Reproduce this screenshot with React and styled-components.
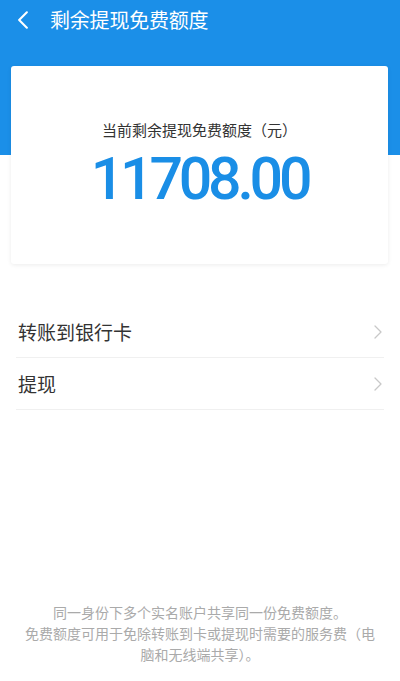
import React from "react";
import styled, { createGlobalStyle } from "styled-components";

const Global = createGlobalStyle`
  html, body {
    margin: 0;
    padding: 0;
    background: #fff;
    font-family: Roboto, "Noto Sans CJK SC", "Noto Sans", sans-serif;
  }
`;

const Page = styled.div`
  display: flex;
  flex-direction: column;
  min-height: 100vh;
  width: 400px;
  background: #fff;
`;

const Hero = styled.div`
  background: #1b8fe8;
  height: 155px;
  flex-shrink: 0;
  padding: 0 11px 0 17px;
  box-sizing: border-box;
`;

const NavBar = styled.div`
  display: flex;
  align-items: center;
  height: 39px;
  color: #fff;
`;

const BackBtn = styled.div`
  width: 14px;
  height: 18px;
  display: flex;
  align-items: center;
  margin-right: 19px;
`;

const Title = styled.div`
  font-size: 20px;
  letter-spacing: -0.2px;
`;

// card lies over the lower part of the blue band
const Card = styled.div`
  position: relative;
  margin: -89px 12px 0 11px;
  height: 198px;
  flex-shrink: 0;
  background: #fff;
  border-radius: 3px;
  box-shadow: 0 1px 4px rgba(0, 0, 0, 0.08);
  display: flex;
  flex-direction: column;
  align-items: center;
  padding-top: 54px;
  box-sizing: border-box;
`;

const CardLabel = styled.div`
  font-size: 15px;
  color: #333;
  line-height: 22px;
`;

const Amount = styled.div`
  font-family: Roboto, sans-serif;
  font-weight: 500;
  font-size: 59px;
  line-height: 60px;
  color: #1a8ee6;
  letter-spacing: -4.2px;
  margin-top: 7px;
`;

const List = styled.div`
  margin-top: 42px;
  padding: 0 16px;
`;

const Row = styled.div`
  display: flex;
  align-items: center;
  justify-content: space-between;
  height: 51px;
  border-bottom: 1px solid #f0f0f0;
  padding: 0 2px;
  font-size: 19px;
  color: #333;
`;

const Footer = styled.div`
  margin-top: auto;
  padding: 0 24px 15px;
  text-align: center;
  font-size: 14px;
  line-height: 21px;
  color: #aaa;
`;

const BackIcon = () => (
  <svg width="12" height="18" viewBox="0 0 8 14" fill="none">
    <path d="M7 1 L1 7 L7 13" stroke="#fff" strokeWidth="1.6" strokeLinecap="round" strokeLinejoin="round" />
  </svg>
);

const RowArrow = () => (
  <svg width="8" height="14" viewBox="0 0 8 14" fill="none">
    <path d="M1 1 L7 7 L1 13" stroke="#c8c8c8" strokeWidth="1.3" strokeLinecap="round" strokeLinejoin="round" />
  </svg>
);

export default function App() {
  return (
    <Page>
      <Global />
      <Hero>
        <NavBar>
          <BackBtn>
            <BackIcon />
          </BackBtn>
          <Title>剩余提现免费额度</Title>
        </NavBar>
      </Hero>
      <Card>
        <CardLabel>当前剩余提现免费额度（元）</CardLabel>
        <Amount>11708.00</Amount>
      </Card>
      <List>
        <Row>
          转账到银行卡
          <RowArrow />
        </Row>
        <Row>
          提现
          <RowArrow />
        </Row>
      </List>
      <Footer>
        同一身份下多个实名账户共享同一份免费额度。
        <br />
        免费额度可用于免除转账到卡或提现时需要的服务费（电脑和无线端共享）。
      </Footer>
    </Page>
  );
}
